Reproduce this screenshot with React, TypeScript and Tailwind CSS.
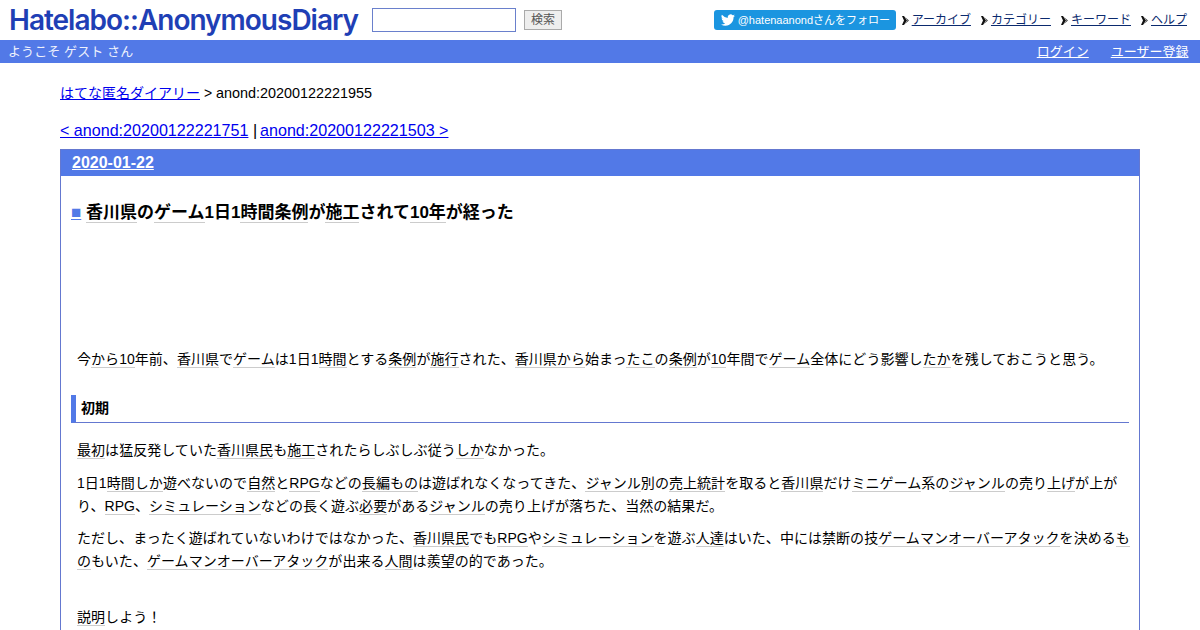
/**
 * はてな匿名ダイアリー — 記事ページのトップ部分。
 */
import type { ReactNode } from 'react';

const FONT = '[font-family:"Liberation_Sans","Noto_Sans_CJK_JP",sans-serif]';

// キーワードリンク: 薄いグレーの下線
function K({ children }: { children: ReactNode }) {
  return <span className="border-b border-[#ccc] text-black">{children}</span>;
}

function NavArrow() {
  return (
    <svg width="8" height="9" viewBox="0 0 8 9" className="mr-[2px] shrink-0">
      <path d="M0 0h2l3 4.500-3 4.500h-2l2-4.500z" fill="#111" />
      <path d="M3 1l4 3.500-4 3.500 2.500-3.500z" fill="#444" />
    </svg>
  );
}

function NavLink({ children }: { children: ReactNode }) {
  return (
    <span className="flex items-center">
      <NavArrow />
      <a href="#" className="text-[#0b2a6e] underline">
        {children}
      </a>
    </span>
  );
}

function Header() {
  return (
    <header className="flex h-10 items-center justify-between">
      <div className="flex items-center">
        <a
          href="#"
          className="ml-[9px] w-[349px] whitespace-nowrap font-['Inter',sans-serif] text-[28px] font-semibold leading-none tracking-[-1px] text-[#1f3fb5]"
        >
          Hatelabo::AnonymousDiary
        </a>
        <input className="ml-[14px] h-6 w-[144px] border border-[#6a80cc] bg-white" />
        <button className="ml-2 h-5 w-[38px] border border-[#aaa] bg-[#eee] text-xs text-[#555]">
          検索
        </button>
      </div>
      <div className="mr-[13px] flex items-center gap-[10px] text-xs">
        <span className="mr-[-4px] flex h-5 w-[182px] items-center rounded-[3px] bg-[#1b95e0] pl-[7px] text-[11px] text-white">
          <svg width="14" height="14" viewBox="0 0 24 24" className="mr-[3px]">
            <path
              fill="#fff"
              d="M23.900 4.600a9.800 9.800 0 0 1-2.800.8 4.900 4.900 0 0 0 2.100-2.700 9.800 9.800 0 0 1-3.100 1.200 4.900 4.900 0 0 0-8.400 4.500A13.900 13.900 0 0 1 1.600 3.200a4.900 4.900 0 0 0 1.500 6.500 4.900 4.900 0 0 1-2.200-.6v.1a4.900 4.900 0 0 0 3.900 4.800 4.900 4.900 0 0 1-2.200.1 4.900 4.900 0 0 0 4.600 3.400A9.900 9.900 0 0 1 0 19.500a13.900 13.900 0 0 0 7.500 2.200c9.100 0 14-7.500 14-14v-.6a10 10 0 0 0 2.400-2.500z"
            />
          </svg>
          @hatenaanondさんをフォロー
        </span>
        <NavLink>アーカイブ</NavLink>
        <NavLink>カテゴリー</NavLink>
        <NavLink>キーワード</NavLink>
        <NavLink>ヘルプ</NavLink>
      </div>
    </header>
  );
}

function InfoBar() {
  return (
    <div className="flex h-[23px] items-center justify-between bg-[#5279e7] pl-2 pr-[11px] text-[13px] text-white">
      <span className="tracking-[0.1px] opacity-90">ようこそ ゲスト さん</span>
      <span className="mr-[0.500px] flex gap-[22px]">
        <a href="#" className="underline">ログイン</a>
        <a href="#" className="underline">ユーザー登録</a>
      </span>
    </div>
  );
}

function Article() {
  return (
    <div className="border border-[#6478d0] pb-10">
      <h2 className="h-[26px] bg-[#5279e7] pl-[11px] text-base font-bold leading-[26px] text-white">
        <a href="#" className="underline">2020-01-22</a>
      </h2>
      <div className="px-[10px]">
        <h3 className="mt-[25px] text-[17px] font-bold leading-[24px] text-black">
          <a href="#" className="font-normal text-[#5279e7] underline">■</a>{' '}
          <K>香川県</K>の<K>ゲーム</K>1日1<K>時間</K><K>条例</K>が<K>施工</K>されて<K>10年</K>が経った
        </h3>
        <div className="pl-[6px] text-sm leading-[23px] tracking-[0.04px] text-black">
          <p className="mt-[123px]">
            今<K>から10</K>年前、<K>香川県</K>で<K>ゲーム</K>は1日1<K>時間</K>とする<K>条例</K>が<K>施行</K>された、<K>香川県から</K>始まっ<K>たこ</K>の<K>条例</K>が<K>10</K>年間で<K>ゲーム</K>全体にどう影響し<K>たか</K>を残しておこうと思う。
          </p>
        </div>
        <h4 className="mt-[24px] h-[28px] border-b border-l-[5px] border-b-[#6478d0] border-l-[#5279e7] pl-[5px] text-sm font-bold leading-[27px] text-black">
          初期
        </h4>
        <div className="mr-[-3px] pl-[6px] text-sm leading-[23px] tracking-[0.04px] text-black">
          <p className="mt-[16px]">
            <K>最初</K>は猛反発していた<K>香川県民</K>も<K>施工</K>されたらしぶしぶ従う<K>しか</K>なかった。
          </p>
          <p className="mt-[10px]">
            1日1<K>時間しか</K>遊べないので<K>自然</K>と<K>RPG</K>などの<K>長編もの</K>は遊ばれなくなってきた、<K>ジャンル</K>別の<K>売上</K><K>統計</K>を取ると<K>香川県</K>だけ<K>ミニゲーム</K>系の<K>ジャンル</K>の売り<K>上げ</K>が上がり、<K>RPG</K>、<K>シミュレーション</K>などの長く遊ぶ<K>必要</K>がある<K>ジャンル</K>の売り上げが落ちた、当然の結果だ。
          </p>
          <p className="mt-[9px]">
            ただし、まったく遊ばれていないわけではなかった、<K>香川県民</K>でも<K>RPG</K>や<K>シミュレーション</K>を遊ぶ<K>人達</K>はいた、中には禁断の技<K>ゲームマンオーバーアタック</K>を決める<K>もの</K>もいた、<K>ゲームマンオーバーアタック</K>が出来る<K>人間</K>は羨望の的であった。
          </p>
          <p className="mt-[33px]">
            <K>説明</K>しよう！
          </p>
        </div>
      </div>
    </div>
  );
}

export default function App() {
  return (
    <div className={`h-[630px] overflow-hidden bg-white ${FONT}`}>
      <Header />
      <InfoBar />
      <main className="mx-[60px]">
        <p className="mt-[20px] text-[14px] leading-5 text-black">
          <a href="#" className="text-[#0000ee] underline">はてな匿名ダイアリー</a> &gt;{' '}
          <span className="text-[14.400px]">anond:20200122221955</span>
        </p>
        <p className="mt-[17px] mb-[9px] text-[16.100px] leading-[20px] text-black">
          <a href="#" className="text-[#0000ee] underline">&lt; anond:20200122221751</a> |{' '}
          <a href="#" className="ml-[-1.500px] text-[#0000ee] underline">anond:20200122221503 &gt;</a>
        </p>
        <Article />
      </main>
    </div>
  );
}
